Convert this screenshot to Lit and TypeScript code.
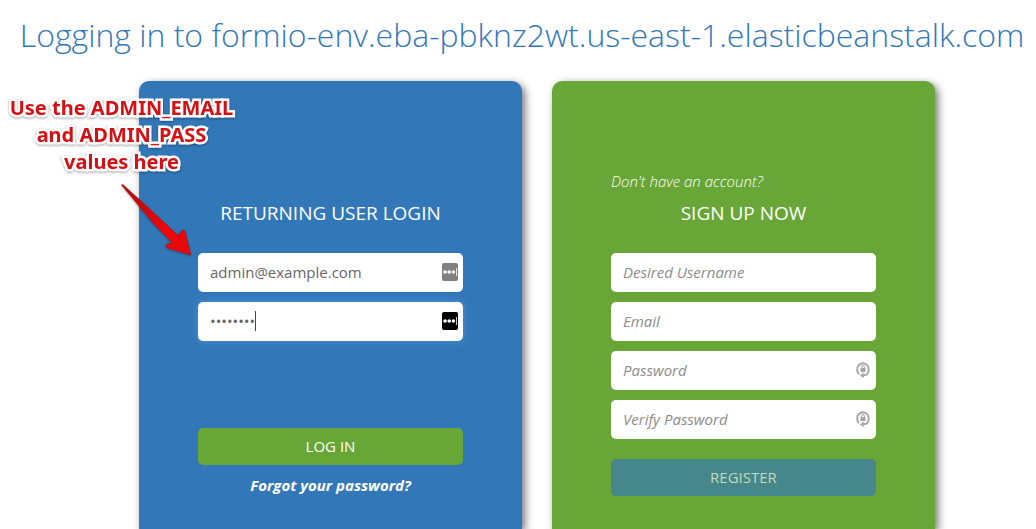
import { LitElement, html, css, svg, nothing } from "lit";
import { customElement, property } from "lit/decorators.js";

const managerIcon = svg`
  <circle cx="3" cy="9" r="1.8" fill="#fff"/>
  <circle cx="7.2" cy="9" r="1.8" fill="#fff"/>
  <circle cx="11.4" cy="9" r="1.8" fill="#fff"/>
  <path d="M14.5 5v8" stroke="#fff" stroke-width=".8"/>`;

const generateIcon = svg`
  <path d="M3.1 13.4A5.8 6.4 0 1 1 10.6 13.6L7.500 14.300" fill="none" stroke="#a6a6a6" stroke-width="1.9"/>
  <path d="M3.800 14.400l4-3v5.600z" fill="#a6a6a6"/>
  <rect x="4.500" y="7" width="5" height="4" rx=".5" fill="#a6a6a6"/>
  <path d="M5.600 7.200V6a1.400 1.500 0 0 1 2.800 0v1.200" fill="none" stroke="#a6a6a6" stroke-width="1"/>`;

@customElement("form-field")
class FormField extends LitElement {
  @property() label = "";
  @property() type = "text";
  @property() value = "";
  @property() icon = "";
  @property({ type: Boolean }) active = false;

  static styles = css`
    :host { display: block; }
    .field { position: relative; display: block; }
    .input {
      display: block;
      box-sizing: border-box;
      width: 100%;
      height: 39px;
      margin: 0;
      padding: 0 32px 2px 12px;
      border: 0;
      border-radius: 5px;
      outline: 0;
      background: #fff;
      color: #666;
      font: 15px "Open Sans", "Noto Sans", sans-serif;
    }
    .input::placeholder { color: #8c8c8c; font-style: italic; opacity: 1; }
    .active { box-shadow: 0 0 8px rgba(102, 160, 233, 0.6); }
    .icon { position: absolute; top: 50%; }
    .manager {
      right: 5px;
      width: 16px;
      height: 18px;
      margin-top: -10px;
      border-radius: 2px;
      background: #808080;
    }
    .active ~ .manager { background: #000; }
    .generate { right: 6px; width: 14px; height: 18px; margin-top: -10px; }
    .caret {
      position: absolute;
      top: 9px;
      left: 57px;
      width: 1px;
      height: 20px;
      background: #444;
    }
  `;

  render() {
    return html`<div class="field">
      <input
        class="input ${this.active ? "active" : ""}"
        type=${this.type}
        aria-label=${this.label}
        placeholder=${this.label}
        .value=${this.value}
      />
      ${this.active ? html`<span class="caret"></span>` : nothing}
      ${this.icon === "manager"
        ? html`<svg class="icon manager" viewBox="0 0 16 18" aria-hidden="true">${managerIcon}</svg>`
        : nothing}
      ${this.icon === "generate"
        ? html`<svg class="icon generate" viewBox="0 0 14 18" aria-hidden="true">${generateIcon}</svg>`
        : nothing}
    </div>`;
  }
}

@customElement("app-root")
class AppRoot extends LitElement {
  static styles = css`
    :host {
      display: block;
      position: relative;
      box-sizing: border-box;
      height: 100vh;
      overflow: hidden;
      background: #fff;
      color: #fff;
      font: 15px/20px "Open Sans", "Noto Sans", sans-serif;
    }
    .page { display: flex; flex-direction: column; height: 100%; }
    .title {
      margin: 0;
      padding: 10px 0 0 8px;
      text-align: center;
      white-space: nowrap;
      font-size: 32px;
      font-weight: 300;
      line-height: 50px;
      color: #3277b8;
    }
    .cards {
      flex: 1;
      display: grid;
      grid-template-columns: 1fr 1fr;
      gap: 30px;
      padding: 21px 101px 0 139px;
    }
    .card {
      padding: 90px 59px 0;
      border-radius: 10px 10px 0 0;
      box-shadow: 3px 3px 8px rgba(0, 0, 0, 0.55);
    }
    .login { background: #3277b8; }
    .signup { background: #68a637; }
    .form { display: flex; flex-direction: column; gap: 10px; }
    .hint { margin: 0; height: 20px; font-weight: 300; font-style: italic; }
    .heading {
      margin: 8px 0 26px;
      text-align: center;
      font-size: 19px;
      font-weight: 400;
      line-height: 28px;
      text-transform: uppercase;
    }
    .button {
      height: 37px;
      margin: 10px 0 0;
      padding: 0 0 2px;
      border: 0;
      border-radius: 5px;
      background: #68a637;
      color: #fff;
      font: inherit;
      text-transform: uppercase;
    }
    .submit { margin-top: 77px; }
    .register { background: #45878b; color: #c3dbbc; }
    .forgot {
      align-self: center;
      color: #fff;
      font-weight: 700;
      font-style: italic;
      text-decoration: none;
    }
    .note {
      position: absolute;
      top: 94px;
      left: 9px;
      width: 225px;
      margin: 0;
      text-align: center;
      white-space: nowrap;
      font: 700 20px/27px "Noto Sans", "Open Sans", sans-serif;
      color: #d51014;
      -webkit-text-stroke: 5px #fff;
      paint-order: stroke fill;
      filter: drop-shadow(0 1px 1px rgba(0, 0, 0, 0.35));
    }
    .arrow {
      position: absolute;
      top: 180px;
      left: 116px;
      width: 80px;
      height: 80px;
      filter: drop-shadow(0 1px 1px rgba(0, 0, 0, 0.3));
    }
  `;

  render() {
    return html`
      <main class="page">
        <h1 class="title">Logging in to formio-env.eba-pbknz2wt.us-east-1.elasticbeanstalk.com</h1>
        <div class="cards">
          <section class="card login">
            <p class="hint"></p>
            <h2 class="heading">Returning User Login</h2>
            <form class="form">
              <form-field label="Email" value="admin@example.com" icon="manager"></form-field>
              <form-field label="Password" type="password" value="password" icon="manager" active></form-field>
              <button class="button submit" type="button">Log In</button>
              <a class="forgot" href="#">Forgot your password?</a>
            </form>
          </section>
          <section class="card signup">
            <p class="hint">Don't have an account?</p>
            <h2 class="heading">Sign Up Now</h2>
            <form class="form">
              <form-field label="Desired Username"></form-field>
              <form-field label="Email"></form-field>
              <form-field label="Password" type="password" icon="generate"></form-field>
              <form-field label="Verify Password" type="password" icon="generate"></form-field>
              <button class="button register" type="button" disabled>Register</button>
            </form>
          </section>
        </div>
      </main>
      <p class="note">Use the ADMIN_EMAIL<br />and ADMIN_PASS<br />values here</p>
      <svg class="arrow" viewBox="0 0 80 80" aria-hidden="true">
        <defs>
          <linearGradient id="red" x1="0" y1="0" x2="1" y2="1">
            <stop offset="0" stop-color="#a90d10" />
            <stop offset="0.65" stop-color="#f00808" />
            <stop offset="1" stop-color="#e00a0a" />
          </linearGradient>
        </defs>
        <path
          d="M5.500 5Q6 4 7 4.700L24 20 62.300 55.700 64.500 52Q66 49.800 68 50.300 69 50.800 69.300 52L74.700 75 52 68.200Q50 67.300 50 65.500 50.300 63.800 52.500 63.600L56.700 63.300 37.300 43.300Z"
          fill="url(#red)" stroke="#b80c0f" stroke-width=".6" />
      </svg>
    `;
  }
}
